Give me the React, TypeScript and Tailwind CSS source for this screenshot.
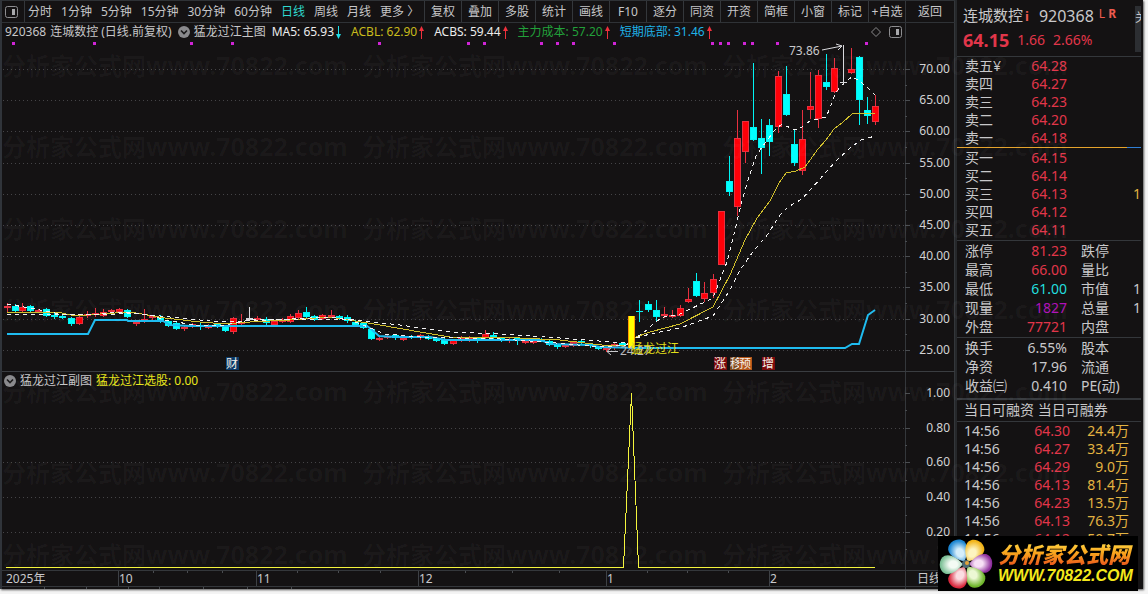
import React from "react";

type Kind = "r" | "c" | "w";
/** x centre, kind, wick top, wick bottom, body top, body bottom */
type Candle = [number, Kind, number, number, number, number];

const FONT = "font-['Noto_Sans','Noto_Sans_CJK_SC',sans-serif]";

const candles: Candle[] = [
  [7, "r", 303, 313, 306, 308], [15, "c", 304, 312, 306, 311], [22, "r", 303, 313, 307, 311],
  [30, "c", 305, 313, 306, 311], [38, "r", 309, 313, 310, 312], [46, "c", 308, 317, 309, 316],
  [54, "c", 313, 319, 315, 317], [62, "c", 314, 319, 316, 318], [71, "c", 317, 326, 318, 324],
  [79, "r", 316, 325, 317, 324], [87, "r", 311, 318, 314, 316], [95, "r", 308, 317, 313, 315],
  [103, "r", 309, 317, 312, 316], [111, "r", 309, 313, 310, 312], [119, "r", 308, 314, 309, 312],
  [127, "c", 309, 318, 310, 317], [136, "r", 320, 326, 322, 324], [144, "r", 309, 323, 319, 321],
  [152, "r", 315, 320, 316, 318], [160, "c", 315, 323, 317, 321], [168, "c", 320, 327, 321, 326],
  [176, "c", 322, 330, 323, 329], [184, "r", 325, 331, 327, 329], [192, "r", 323, 328, 324, 327],
  [200, "c", 323, 330, 325, 327], [208, "r", 324, 329, 325, 328], [217, "c", 323, 328, 324, 326],
  [225, "c", 325, 332, 326, 331], [233, "r", 317, 334, 318, 332], [241, "r", 314, 325, 322, 324],
  [249, "w", 307, 321, 318, 320], [257, "r", 316, 322, 318, 320], [266, "c", 317, 325, 319, 323],
  [274, "r", 320, 326, 321, 325], [282, "r", 318, 323, 320, 322], [290, "r", 314, 323, 316, 322],
  [298, "r", 310, 319, 313, 318], [306, "c", 307, 319, 312, 317], [314, "c", 315, 321, 316, 320],
  [322, "r", 314, 320, 315, 319], [331, "r", 310, 318, 315, 317], [339, "c", 315, 320, 316, 318],
  [347, "c", 315, 323, 317, 321], [355, "c", 320, 326, 322, 325], [363, "c", 322, 329, 323, 328],
  [371, "c", 328, 340, 329, 339], [379, "r", 337, 341, 338, 340], [387, "r", 335, 339, 336, 338],
  [395, "c", 334, 340, 335, 338], [403, "r", 337, 341, 338, 340], [411, "c", 335, 339, 336, 338],
  [420, "r", 334, 340, 335, 338], [428, "c", 335, 340, 337, 339], [436, "c", 337, 342, 338, 341],
  [444, "c", 338, 345, 339, 344], [453, "r", 339, 345, 340, 344], [461, "r", 336, 342, 338, 340],
  [469, "r", 336, 342, 338, 340], [477, "c", 337, 343, 338, 340], [485, "r", 330, 339, 334, 338],
  [493, "c", 332, 339, 335, 337], [501, "c", 337, 342, 338, 341], [509, "r", 338, 343, 339, 341],
  [517, "c", 337, 345, 338, 341], [525, "r", 341, 344, 341, 343], [533, "r", 340, 344, 341, 343],
  [541, "c", 338, 342, 339, 341], [549, "c", 340, 346, 341, 345], [557, "c", 344, 349, 345, 347],
  [565, "r", 344, 348, 345, 347], [573, "r", 341, 347, 342, 346], [581, "c", 340, 344, 341, 343],
  [590, "c", 343, 348, 344, 346], [598, "c", 346, 350, 347, 349], [606, "r", 347, 352, 348, 350],
  [614, "r", 343, 350, 344, 348], [622, "c", 342, 347, 343, 346],
  [639, "c", 300, 322, 311, 312], [648, "c", 301, 312, 304, 310], [656, "c", 300, 321, 310, 317],
  [664, "r", 307, 318, 314, 316], [672, "r", 310, 318, 315, 317], [680, "r", 305, 317, 308, 316],
  [688, "r", 288, 303, 299, 302], [696, "c", 273, 297, 281, 296], [704, "r", 282, 302, 293, 299],
  [713, "r", 274, 298, 279, 293], [721, "r", 211, 265, 211, 265], [729, "c", 156, 196, 181, 192],
  [737, "r", 110, 216, 138, 207], [745, "r", 121, 163, 121, 152], [753, "c", 63, 141, 127, 140],
  [761, "c", 119, 174, 138, 148], [769, "c", 119, 156, 125, 142], [778, "r", 71, 133, 76, 127],
  [786, "c", 66, 116, 94, 115], [794, "c", 130, 166, 144, 163], [802, "r", 110, 175, 139, 171],
  [810, "r", 72, 119, 106, 110], [818, "r", 70, 128, 75, 119], [826, "c", 54, 90, 82, 87],
  [834, "r", 58, 93, 68, 92], [843, "w", 45, 85, 82, 83], [851, "r", 48, 74, 69, 73],
  [859, "c", 56, 125, 57, 100], [867, "c", 97, 124, 110, 116], [875, "r", 95, 125, 106, 122],
];

const candleColor: Record<Kind, string> = { r: "#e8303f", c: "#00f4f4", w: "#d8d8dc" };
const bodyColor: Record<Kind, string> = { r: "#ff0008", c: "#00ffff", w: "#d8d8dc" };

const bottomLine =
  "7,334 88,334 95,320 127,320 128,321 163,321 170,325 190,326 367,326 371,329 379,336 396,337 430,337 446,340 541,340 550,344 590,345 600,347 640,348 845,348 852,344 859,344 868,315 875,310";
const costLine =
  "6,312 62,313 75,316 100,314 130,312 165,318 200,322 225,324 250,322 290,320 330,317 355,321 380,325 420,332 450,337 500,337 560,340 610,346 626,345 636,337 650,332 680,324 713,307 730,275 745,240 757,218 770,201 779,183 786,173 796,171 805,167 818,149 826,140 834,129 843,122 852,114 875,113";
const fastLine =
  "7,304 30,308 60,314 90,315 120,312 150,315 165,320 200,326 225,325 250,320 290,319 330,317 350,320 363,325 385,334 420,337 500,339 545,342 600,347 626,345 637,337 647,330 655,322 664,317 680,314 713,298 727,262 735,230 741,205 748,180 756,156 762,147 775,130 782,124 795,130 802,127 810,121 826,117 830,108 836,92 845,82 852,77 858,80 867,87 875,95";
const slowLine =
  "7,315 60,314 100,315 130,313 160,316 220,322 290,319 355,320 400,325 450,332 500,334 560,338 625,343 636,338 650,334 680,328 713,316 730,290 740,270 752,253 768,234 780,215 788,207 802,199 812,188 835,162 850,148 861,140 875,136";

const signalDots = [13, 94, 191, 232, 379, 468, 484, 541, 557, 573, 614, 712, 720, 728, 744, 752, 777, 866];
const priceAxis: [number, string][] = [
  [69, "70.00"], [100, "65.00"], [131, "60.00"], [163, "55.00"], [194, "50.00"],
  [225, "45.00"], [256, "40.00"], [287, "35.00"], [319, "30.00"], [350, "25.00"],
];
const subAxis: [number, string][] = [[393, "1.00"], [428, "0.80"], [462, "0.60"], [497, "0.40"], [532, "0.20"]];
const months: [number, string][] = [[118, "10"], [256, "11"], [418, "12"], [606, "1"], [769, "2"]];
const badges: [number, string, string][] = [
  [226, "财", "#0b3a68"], [714, "涨", "#7c0a0c"], [730, "移", "#7d4a1e"], [739, "预", "#b4561a"], [762, "增", "#7c0a0c"],
];

function PanelIcon() {
  return (
    <svg width="13" height="12" viewBox="0 0 13 12" className="shrink-0" aria-hidden="true">
      <rect x="0.5" y="0.5" width="12" height="11" rx="2" fill="none" stroke="#8d8d90" />
      <rect x="7" y="3" width="3" height="6" fill="#a9a9ac" />
    </svg>
  );
}

function CollapseIcon() {
  return (
    <svg width="12" height="12" viewBox="0 0 12 12" className="shrink-0" aria-hidden="true">
      <circle cx="6" cy="6" r="6" fill="#8a8a8d" />
      <path d="M3 4.5L6 7.5L9 4.5" fill="none" stroke="#1a191a" strokeWidth="1.6" />
    </svg>
  );
}

function Trend({ up }: { up: boolean }) {
  return up ? (
    <svg width="7" height="13" viewBox="0 0 7 13" className="shrink-0" aria-hidden="true">
      <path d="M3.5 0L6 5H1z" fill="#f0303c" />
      <path d="M3.5 3V13" stroke="#f0303c" />
    </svg>
  ) : (
    <svg width="7" height="13" viewBox="0 0 7 13" className="shrink-0" aria-hidden="true">
      <path d="M3.5 13L6 8H1z" fill="#20e0e8" />
      <path d="M3.5 0V10" stroke="#20e0e8" />
    </svg>
  );
}

const periods = ["分时", "1分钟", "5分钟", "15分钟", "30分钟", "60分钟", "日线", "周线", "月线"];
const tools = ["复权", "叠加", "多股", "统计", "画线", "F10", "逐分", "同资", "开资", "简框", "小窗", "标记"];

function Toolbar() {
  return (
    <nav className="flex h-[23px] items-stretch whitespace-nowrap border-y border-[#2f3236] text-xs leading-5 text-[#c6c6c8]">
      <button aria-label="切换面板" className="flex w-[23px] items-center justify-center border-r border-[#34373b] pr-1">
        <PanelIcon />
      </button>
      <div className="flex flex-1 items-center gap-[9px] pl-[3px]">
        {periods.map((p) => (
          <button key={p} className={p === "日线" ? "text-[#2fd9d0]" : ""}>
            {p}
          </button>
        ))}
        <button>更多 〉</button>
      </div>
      {tools.map((t) => (
        <button key={t} className="w-[37px] border-l border-[#34373b] text-center">
          {t}
        </button>
      ))}
      <button className="w-[37px] border-l border-[#34373b] text-center">+自选</button>
      <button className="w-[50px] border-x border-[#34373b] text-center">返回</button>
    </nav>
  );
}

const indicators = [
  { text: "MA5: 65.93", color: "text-[#ececec]", up: false },
  { text: "ACBL: 62.90", color: "text-[#c9bb1c]", up: true },
  { text: "ACBS: 59.44", color: "text-[#ececec]", up: true },
  { text: "主力成本: 57.20", color: "text-[#22a03a]", up: true },
  { text: "短期底部: 31.46", color: "text-[#1fb2e8]", up: true },
];

function Legend() {
  return (
    <div className="flex h-[18px] whitespace-nowrap text-xs leading-[18px] text-[#c6c6c8]">
      <div className="flex flex-1 items-center pl-[3px]">
        <span>920368</span>
        <span className="ml-1">连城数控</span>
        <span className="ml-[3px] mr-[6px]">(日线.前复权)</span>
        <CollapseIcon />
        <span className="ml-1">猛龙过江主图</span>
        <div className="ml-[6px] flex gap-[9px]">
          {indicators.map((i) => (
            <span key={i.text} className={`flex items-center gap-px ${i.color}`}>
              {i.text}
              <Trend up={i.up} />
            </span>
          ))}
        </div>
        <div className="ml-auto flex items-center gap-2 pr-[3px]">
          <svg width="10" height="10" viewBox="0 0 10 10" aria-hidden="true">
            <path d="M5 0.5L9.5 5L5 9.5L0.5 5z" fill="none" stroke="#88888b" />
          </svg>
          <PanelIcon />
        </div>
      </div>
      <div className="w-[50px] border-x border-[#34373b]" />
    </div>
  );
}

function Grid({ rows }: { rows: number[] }) {
  return (
    <g stroke="#454447" strokeDasharray="1 3" shapeRendering="crispEdges">
      {rows.map((y) => (
        <path key={y} d={`M3 ${y}.5H904`} />
      ))}
    </g>
  );
}

function AxisLabels({ rows }: { rows: [number, string][] }) {
  return (
    <g>
      {rows.map(([y, t]) => (
        <g key={t}>
          <path d={`M905 ${y}.5H910`} stroke="#4a4d51" />
          <text x="950" y={y + 4} fontSize="12" textAnchor="end" fill="#d2d2d4">
            {t}
          </text>
        </g>
      ))}
    </g>
  );
}

function MainChart() {
  return (
    <svg viewBox="2 41 953 330" className="block w-full" role="img" aria-label="日线主图">
      <Grid rows={priceAxis.map(([y]) => y)} />
      <path d="M905.5 41V371M954.5 41V371" stroke="#34373b" />
      <AxisLabels rows={priceAxis} />
      <path d="M905 85.5h2M905 116.5h2M905 147.5h2M905 178.5h2M905 210.5h2M905 241.5h2M905 272.5h2M905 303.5h2M905 334.5h2" stroke="#4a4d51" />
      {signalDots.map((x) => (
        <rect key={x} x={x - 1} y="42" width="3" height="3" fill="#d024d6" />
      ))}
      <g shapeRendering="crispEdges">
        {candles.map(([x, k, wt, wb, bt, bb]) => (
          <g key={x}>
            <rect x={x} y={wt} width="1" height={wb - wt} fill={candleColor[k]} />
            <rect x={x - 3} y={bt} width="7" height={bb - bt} fill={candleColor[k]} />
            {bb - bt > 2 && k !== "w" && (
              <rect x={x - 2} y={bt + 1} width="5" height={bb - bt - 2} fill={bodyColor[k]} />
            )}
          </g>
        ))}
      </g>
      <polyline points={bottomLine} fill="none" stroke="#1fbcf0" strokeWidth="2" />
      <g fill="none" shapeRendering="crispEdges">
        <polyline points={costLine} stroke="#d0bf2c" />
        <polyline points={fastLine} stroke="#f2f2f2" strokeDasharray="4 4" />
        <polyline points={slowLine} stroke="#f2f2f2" strokeDasharray="4 4" />
        <rect x="628" y="316" width="7" height="32" fill="#ff9a00" />
        <rect x="629" y="316" width="5" height="32" fill="#ffff00" />
      </g>
      <g fontSize="12">
        <path d="M618 351.5H607M611 348L607 351.5L611 355" fill="none" stroke="#c9c9cc" />
        <text x="620" y="355" fill="#b7b7bb">24.27</text>
        <text x="631" y="353" fill="#e0de1a">猛龙过江</text>
        <text x="789" y="55" fill="#c9c9cc">73.86</text>
        <path d="M822 50L842 46M836 44L842 46L838 50" fill="none" stroke="#d8d8dc" />
        {badges.map(([x, t, bg]) => (
          <g key={t}>
            <rect x={x} y="357" width="13" height="13" fill={bg} />
            <text x={x} y="368" fill="#f4efe9">{t}</text>
          </g>
        ))}
      </g>
    </svg>
  );
}

function SubChart() {
  return (
    <svg viewBox="2 389 953 200" className="block w-full overflow-visible" role="img" aria-label="副图">
      <Grid rows={[428, 462, 497, 532]} />
      <path d="M905.5 389V589M954.5 389V589" stroke="#34373b" />
      <path d="M905 410.5h2M905 445.5h2M905 480.5h2M905 515.5h2M905 549.5h2" stroke="#4a4d51" />
      <AxisLabels rows={subAxis} />
      <polyline
        points="6,567.5 623.5,567.5 631.5,393 638.5,567.5 875,567.5"
        fill="none"
        stroke="#f4f43c"
        shapeRendering="crispEdges"
      />
      <path d="M2 570.5H955M2 586.5H955" stroke="#34373b" />
      <path
        d="M153.5 571v2M187.5 571v2M222.5 571v2M297.5 571v2M338.5 571v2M380.5 571v2M465.5 571v2M512.5 571v2M559.5 571v2M647.5 571v2M687.5 571v2M728.5 571v2M44.5 587v2M86.5 587v2M128.5 587v2M159.5 587v2M203.5 587v2M247.5 587v2M291.5 587v2"
        stroke="#4a4d51"
      />
      <g fontSize="12" fill="#c9c9cc">
        <text x="6" y="583">2025年</text>
        {months.map(([x, t]) => (
          <g key={t}>
            <path d={`M${x}.5 571V586`} stroke="#3e4145" />
            <text x={x + 1} y="583">{t}</text>
          </g>
        ))}
        <text x="917" y="583">日线</text>
      </g>
    </svg>
  );
}

const red = "text-[#e2364a]";
const sells = [["卖五¥", "64.28"], ["卖四", "64.27"], ["卖三", "64.23"], ["卖二", "64.20"], ["卖一", "64.18"]];
const buys = [["买一", "64.15"], ["买二", "64.14"], ["买三", "64.13", "1"], ["买四", "64.12"], ["买五", "64.11"]];

function Book({ rows }: { rows: string[][] }) {
  return (
    <table className="w-full table-fixed border-collapse">
      <tbody>
        {rows.map(([label, price, qty]) => (
          <tr key={label} className="h-[18px] leading-[18px]">
            <th className="w-[66px] p-0 pl-2 text-left font-normal">{label}</th>
            <td className={`w-[44px] p-0 text-right ${red}`}>{price}</td>
            <td className="p-0 text-right text-[#e3b341]">{qty}</td>
          </tr>
        ))}
      </tbody>
    </table>
  );
}

const stats = [
  ["涨停", "81.23", red, "跌停", ""],
  ["最高", "66.00", red, "量比", ""],
  ["最低", "61.00", "text-[#22dede]", "市值", "1"],
  ["现量", "1827", "text-[#b010b8]", "总量", "1"],
  ["外盘", "77721", red, "内盘", ""],
];
const fundamentals = [
  ["换手", "6.55%", "", "股本", ""],
  ["净资", "17.96", "", "流通", ""],
  ["收益㈢", "0.410", "", "PE(动)", ""],
];

function Stats({ rows }: { rows: string[][] }) {
  return (
    <table className="w-full table-fixed border-collapse">
      <tbody>
        {rows.map(([a, b, color, c, d]) => (
          <tr key={a} className="h-[19px] leading-[19px]">
            <th className="w-[52px] p-0 pl-2 text-left font-normal">{a}</th>
            <td className={`w-[58px] p-0 text-right ${color}`}>{b}</td>
            <th className="w-[62px] p-0 pl-[14px] text-left font-normal">{c}</th>
            <td className="p-0 text-right">{d}</td>
          </tr>
        ))}
      </tbody>
    </table>
  );
}

const ticks = [
  ["64.30", "24.4万"], ["64.27", "33.4万"], ["64.29", "9.0万"], ["64.13", "81.4万"],
  ["64.23", "13.5万"], ["64.13", "76.3万"], ["64.12", "50.7万"], ["64.13", "22.6万"], ["64.15", "24.2万"],
];

function QuotePanel() {
  return (
    <aside className="w-[188px] shrink-0 overflow-hidden whitespace-nowrap border-l-2 border-[#26282b] pr-[2px] text-sm text-[#c8c8ca]">
      <header className="flex h-[57px] border-b border-[#34373b]">
        <div className="flex-1 pl-[6px] pt-[5px]">
          <div className="flex h-[22px] items-center">
            <span className="text-[15px]">连城数控</span>
            <span className="ml-[2px] text-[13px] font-bold text-[#ee5a4e]">i</span>
            <span className="ml-[10px] text-base">920368</span>
            <span className="mb-1 ml-[5px] text-xs leading-4 text-[#ee5a4e]">L</span>
            <span className="mb-1 ml-[3px] text-xs font-bold leading-4 text-[#ee5a4e]">R</span>
          </div>
          <div className={`flex h-[26px] items-center gap-2 ${red}`}>
            <strong className="text-lg leading-6">64.15</strong>
            <span>1.66</span>
            <span>2.66%</span>
          </div>
        </div>
        <div className="mb-1 mt-[6px] w-[6px] overflow-hidden bg-[#2c2e32] pt-1 text-xs leading-4">关</div>
      </header>
      <Book rows={sells} />
      <div className="flex h-px">
        <div className="flex-1 bg-[#e5a32c]" />
        <div className="w-[14px] bg-[#2f7fd6]" />
      </div>
      <div className="border-b border-[#34373b] pb-px pt-px">
        <Book rows={buys} />
      </div>
      <div className="border-b border-[#34373b] pb-px">
        <Stats rows={stats} />
      </div>
      <div className="border-b-2 border-[#34373b] pb-[3px]">
        <Stats rows={fundamentals} />
      </div>
      <div className="h-[22px] border-b border-[#34373b] pl-[7px] leading-5">当日可融资 当日可融券</div>
      <table className="w-full table-fixed border-collapse">
        <tbody>
          {ticks.map(([price, vol], i) => (
            <tr key={i} className="h-[18px] leading-[18px]">
              <td className="w-[60px] p-0 pl-[7px]">14:56</td>
              <td className={`w-[53px] p-0 text-right ${red}`}>{price}</td>
              <td className="p-0 pr-3 text-right text-[#e3b341]">{vol}</td>
            </tr>
          ))}
        </tbody>
      </table>
    </aside>
  );
}

const petals: [number, string, string][] = [
  [-28, "#1c86d2", "#d5eefb"],
  [30, "#f2b418", "#fdf4c0"],
  [88, "#8e2f9c", "#f7e0f6"],
  [146, "#6fb62c", "#ecf8d4"],
  [208, "#d8273c", "#fbdde2"],
  [268, "#7cc096", "#f4fbf4"],
];

function SiteLogo() {
  return (
    <a
      href="#home"
      className="absolute bottom-[3px] right-[10px] flex h-[55px] w-[200px] items-center gap-[5px] overflow-hidden whitespace-nowrap bg-black pl-px"
    >
      <svg width="54" height="54" viewBox="-27 -27 54 54" className="shrink-0" aria-hidden="true">
        <defs>
          {petals.map(([a, edge, core]) => (
            <radialGradient key={a} id={`petal${a}`} cx="50%" cy="58%" r="60%">
              <stop offset="0.3" stopColor={core} />
              <stop offset="0.9" stopColor={edge} />
            </radialGradient>
          ))}
        </defs>
        {petals.map(([a]) => (
          <path
            key={a}
            d="M0 -3C-6 -8 -11 -15 -9 -21C-6 -28 6 -28 9 -21C11 -15 6 -8 0 -3z"
            transform={`rotate(${a})`}
            fill={`url(#petal${a})`}
          />
        ))}
        <circle r="4" fill="#4e6a72" />
        <circle cx="1" cy="-1" r="2" fill="#e3a33a" />
      </svg>
      <span className="flex flex-col pb-px">
        <span className="bg-linear-to-b from-[#ffe24a] via-[#f9a51c] to-[#e8501c] bg-clip-text pr-1 font-['Noto_Sans_CJK_SC',sans-serif] text-[22px] font-black italic leading-[26px] text-transparent">
          分析家公式网
        </span>
        <span className="font-['Liberation_Sans',sans-serif] text-base font-bold italic leading-5 text-[#f4e81c]">
          WWW.70822.COM
        </span>
      </span>
    </a>
  );
}

function Watermark() {
  return (
    <svg className="pointer-events-none absolute inset-0 h-full w-full" aria-hidden="true">
      {[75, 156, 238, 319, 401, 482, 564].map((y) =>
        [2, 362, 722].map((x) => (
          <g key={`${x}-${y}`} fill="#ffffff" fillOpacity="0.035" fontWeight="700">
            <text x={x} y={y} fontSize="24">分析家公式网</text>
            <text x={x + 144} y={y} fontSize="25">www.70822.com</text>
          </g>
        ))
      )}
    </svg>
  );
}

export default function App() {
  return (
    <div className={`relative bg-[#f4f4f4] pb-[5px] pr-[5px] ${FONT}`}>
      <div className="flex border-l-2 border-[#30343a] bg-[#141213] shadow-[1px_1px_2px_#555]">
        <main className="min-w-0 flex-1">
          <Toolbar />
          <Legend />
          <MainChart />
          <div className="flex h-[18px] whitespace-nowrap border-t border-[#3a3d41] text-xs leading-[17px]">
            <div className="flex flex-1 items-center gap-1 pl-[2px] text-[#c6c6c8]">
              <CollapseIcon />
              <span>猛龙过江副图</span>
              <span className="text-[#e8e61c]">猛龙过江选股: 0.00</span>
            </div>
            <div className="w-[50px] border-x border-[#34373b]" />
          </div>
          <SubChart />
        </main>
        <QuotePanel />
      </div>
      <Watermark />
      <SiteLogo />
    </div>
  );
}
